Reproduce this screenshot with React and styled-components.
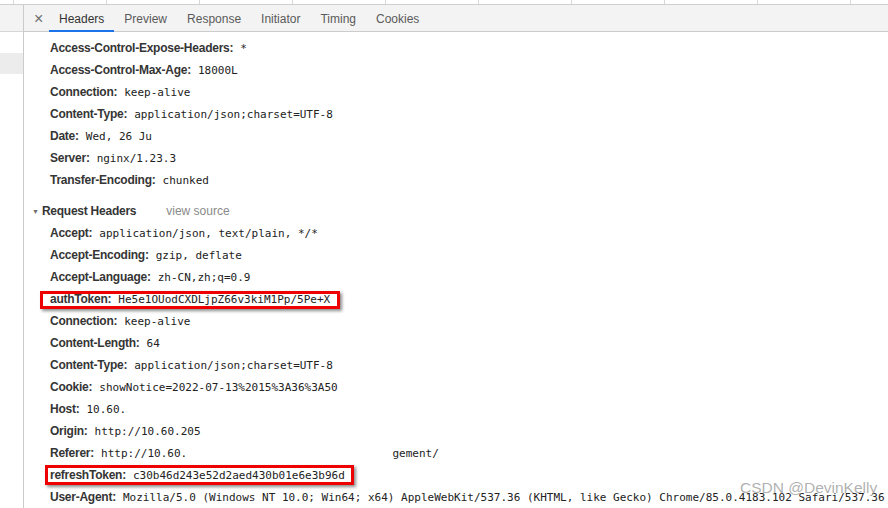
import styled, { createGlobalStyle } from "styled-components";

const GlobalStyle = createGlobalStyle`
  html, body {
    margin: 0;
    padding: 0;
    background: #ffffff;
    overflow: hidden;
  }
  body {
    font-family: "Liberation Sans", Arial, sans-serif;
  }
`;

const responseHeaders = [
  ["Access-Control-Expose-Headers", "*"],
  ["Access-Control-Max-Age", "18000L"],
  ["Connection", "keep-alive"],
  ["Content-Type", "application/json;charset=UTF-8"],
  ["Date", "Wed, 26 Ju"],
  ["Server", "nginx/1.23.3"],
  ["Transfer-Encoding", "chunked"],
];

const requestHeaders = [
  ["Accept", "application/json, text/plain, */*"],
  ["Accept-Encoding", "gzip, deflate"],
  ["Accept-Language", "zh-CN,zh;q=0.9"],
  ["authToken", "He5e1OUodCXDLjpZ66v3kiM1Pp/5Pe+X", { l: -10, r: -10, t: 3, b: 2 }],
  ["Connection", "keep-alive"],
  ["Content-Length", "64"],
  ["Content-Type", "application/json;charset=UTF-8"],
  ["Cookie", "showNotice=2022-07-13%2015%3A36%3A50"],
  ["Host", "10.60."],
  ["Origin", "http://10.60.205"],
  ["Referer", "http://10.60.                               gement/"],
  ["refreshToken", "c30b46d243e52d2aed430b01e6e3b96d", { l: -5, r: -9, t: 1, b: 2 }],
  [
    "User-Agent",
    "Mozilla/5.0 (Windows NT 10.0; Win64; x64) AppleWebKit/537.36 (KHTML, like Gecko) Chrome/85.0.4183.102 Safari/537.36",
  ],
];

const tabs = ["Headers", "Preview", "Response", "Initiator", "Timing", "Cookies"];

export default function App() {
  return (
    <Page>
      <GlobalStyle />
      <TopStrip>
        {Array.from({ length: 10 }).map((_, i) => (
          <StripCell key={i} $first={i === 0} />
        ))}
      </TopStrip>
      <Body>
        <Sidebar>
          <SideHead />
          <SideSelected />
        </Sidebar>
        <Panel>
          <TabBar>
            <Close>×</Close>
            {tabs.map((t, i) => (
              <Tab key={t} $active={i === 0}>
                {t}
              </Tab>
            ))}
          </TabBar>
          <Content>
            {responseHeaders.map(([k, v]) => (
              <Row key={k}>
                <Key>{k}:</Key>
                <Value>{v}</Value>
              </Row>
            ))}
            <Section>
              <Arrow>▼</Arrow>
              <SectionTitle>Request Headers</SectionTitle>
              <ViewSource>view source</ViewSource>
            </Section>
            {requestHeaders.map(([k, v, box]) => (
              <Row key={k}>
                {box ? (
                  <Marked $box={box}>
                    <Key>{k}:</Key>
                    <Value>{v}</Value>
                  </Marked>
                ) : (
                  <>
                    <Key>{k}:</Key>
                    <Value>{v}</Value>
                  </>
                )}
              </Row>
            ))}
          </Content>
        </Panel>
      </Body>
      <Watermark>CSDN @DevinKelly</Watermark>
    </Page>
  );
}

const Page = styled.div`
  position: relative;
  width: 888px;
  height: 508px;
  display: flex;
  flex-direction: column;
  overflow: hidden;
`;

const TopStrip = styled.div`
  display: flex;
  height: 4px;
  border-bottom: 1px solid #cfcfcf;
`;

const StripCell = styled.div`
  flex: 0 0 auto;
  width: ${(p) => (p.$first ? "13px" : "92px")};
  border-right: 1px solid #d8d8d8;
`;

const Body = styled.div`
  flex: 1;
  display: flex;
  min-height: 0;
`;

const Sidebar = styled.div`
  width: 23px;
  flex: 0 0 23px;
  border-right: 1px solid #cbcbcb;
  display: flex;
  flex-direction: column;
`;

const SideHead = styled.div`
  height: 26px;
  background: #f3f3f3;
  border-bottom: 1px solid #d6d6d6;
`;

const SideSelected = styled.div`
  margin-top: 21px;
  height: 21px;
  background: #ececec;
`;

const Panel = styled.div`
  flex: 1;
  display: flex;
  flex-direction: column;
  min-width: 0;
`;

const TabBar = styled.div`
  height: 26px;
  background: #f3f3f3;
  border-bottom: 1px solid #cccccc;
  display: flex;
  align-items: stretch;
  padding-left: 10px;
`;

const Close = styled.span`
  display: flex;
  align-items: center;
  width: 15px;
  padding-top: 1px;
  font-size: 16px;
  color: #6e6e6e;
`;

const Tab = styled.span`
  display: flex;
  align-items: center;
  padding: 3px 10px 0;
  font-size: 12px;
  color: ${(p) => (p.$active ? "#333333" : "#5a5a5a")};
  border-bottom: 2px solid ${(p) => (p.$active ? "#1a73e8" : "transparent")};
  margin-bottom: -1px;
`;

const Content = styled.div`
  padding-top: 5px;
  display: flex;
  flex-direction: column;
`;

const Row = styled.div`
  height: 22px;
  line-height: 22px;
  padding-left: 26px;
  white-space: pre;
  display: flex;
  align-items: baseline;
`;

const Marked = styled.span`
  position: relative;
  display: inline-flex;
  align-items: baseline;

  &::after {
    content: "";
    position: absolute;
    left: ${(p) => p.$box.l}px;
    right: ${(p) => p.$box.r}px;
    top: ${(p) => p.$box.t}px;
    bottom: ${(p) => p.$box.b}px;
    border: 3px solid #ee0000;
    box-shadow: 2px 2px 3px rgba(0, 0, 0, 0.45);
    pointer-events: none;
  }
`;

const Key = styled.span`
  font-family: "Liberation Sans", Arial, sans-serif;
  font-size: 12px;
  font-weight: bold;
  letter-spacing: -0.25px;
  color: #353535;
  margin-right: 7px;
`;

const Value = styled.span`
  font-family: "DejaVu Sans Mono", "Liberation Mono", monospace;
  font-size: 11px;
  color: #222222;
`;

const Section = styled.div`
  margin-top: 9px;
  height: 22px;
  display: flex;
  align-items: center;
  padding-left: 8px;
`;

const Arrow = styled.span`
  font-size: 7px;
  color: #6e6e6e;
  margin-right: 3px;
`;

const SectionTitle = styled.span`
  font-size: 12px;
  font-weight: bold;
  letter-spacing: -0.25px;
  color: #353535;
`;

const ViewSource = styled.span`
  font-size: 12px;
  color: #8a8a8a;
  margin-left: 30px;
`;

const Watermark = styled.div`
  position: absolute;
  left: 740px;
  top: 479px;
  font-family: "Liberation Sans", Arial, sans-serif;
  font-size: 15.5px;
  color: rgba(150, 150, 150, 0.75);
  white-space: nowrap;
`;
